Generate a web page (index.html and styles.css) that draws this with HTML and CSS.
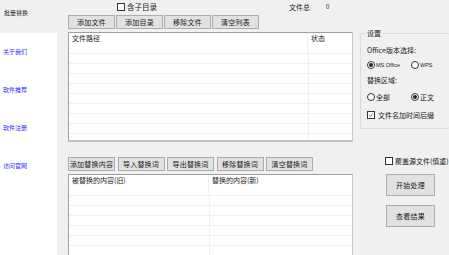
FILE: index.html
```html
<!DOCTYPE html>
<html lang="zh">
<head>
  <meta charset="UTF-8">
  <title>批量替换</title>
  <link rel="stylesheet" href="styles.css">
</head>
<body>
  <div class="window">
    <div class="sidebar">
      <div class="sidebar-head">批量替换</div>
      <div class="sidebar-links">
        <a class="side-link">关于我们</a>
        <a class="side-link">软件推荐</a>
        <a class="side-link">软件注册</a>
        <a class="side-link">访问官网</a>
      </div>
    </div>

    <div class="main">
      <div class="work">
        <div class="top-row">
          <label class="check sub-dir"><span class="box"></span>含子目录</label>
          <span class="count-label">文件总</span>
          <span class="count-value">0</span>
        </div>
        <div class="btn-row">
          <button class="btn">添加文件</button>
          <button class="btn">添加目录</button>
          <button class="btn">移除文件</button>
          <button class="btn">清空列表</button>
        </div>
        <div class="grid-box file-list">
          <div class="grid-head">
            <span class="col col-path">文件路径</span>
            <span class="col col-state">状态</span>
          </div>
          <div class="grid-rows"></div>
        </div>
        <div class="btn-row btn-row-2">
          <button class="btn">添加替换内容</button>
          <button class="btn">导入替换词</button>
          <button class="btn">导出替换词</button>
          <button class="btn">移除替换词</button>
          <button class="btn">清空替换词</button>
        </div>
        <div class="grid-box replace-list">
          <div class="grid-head">
            <span class="col col-old">被替换的内容(旧)</span>
            <span class="col col-new">替换的内容(新)</span>
          </div>
          <div class="grid-rows"></div>
        </div>
      </div>

      <div class="side-panel">
        <fieldset class="group">
          <legend>设置</legend>
          <div class="group-label">Office版本选择:</div>
          <div class="radio-row">
            <label class="radio"><span class="dot on"></span>MS Office</label>
            <label class="radio"><span class="dot"></span>WPS</label>
          </div>
          <div class="group-label">替换区域:</div>
          <div class="radio-row radio-row-2">
            <label class="radio big"><span class="dot"></span>全部</label>
            <label class="radio big"><span class="dot on"></span>正文</label>
          </div>
          <label class="check suffix"><span class="box on">
            <svg viewBox="0 0 8 8"><path d="M1.5 4.2 3.2 6 6.6 1.8"/></svg>
          </span>文件名加时间后缀</label>
        </fieldset>
        <label class="check overwrite"><span class="box"></span>覆盖源文件(慎重)</label>
        <button class="btn big-btn">开始处理</button>
        <button class="btn big-btn">查看结果</button>
      </div>
    </div>
  </div>
</body>
</html>
```

FILE: styles.css
```css
:root {
  --form-bg: #f0f0f0;
  --btn-bg: #e1e1e1;
  --btn-border: #adadad;
  --grid-border: #a0a0a0;
  --grid-line: #f0f0f0;
  --text-main: #1a1a1a;
  --link: #2b2bff;
}
body {
  margin: 0;
  padding: 0;
  width: 449px;
  height: 255px;
  overflow: hidden;
  background: var(--form-bg);
  font-family: "Noto Sans CJK SC", "Liberation Sans", sans-serif;
  color: var(--text-main);
}
.window {
  display: flex;
  height: 255px;
}
.sidebar {
  width: 57px;
  flex-shrink: 0;
  display: flex;
  flex-direction: column;
}
.sidebar-head {
  height: 33px;
  box-sizing: border-box;
  padding: 8px 0 0 4px;
  font-size: 6px;
  line-height: 9px;
}
.sidebar-links {
  flex: 1;
  background: #fff;
  display: flex;
  flex-direction: column;
  padding: 14px 0 0 3px;
  gap: 29px;
}
.side-link {
  color: var(--link);
  font-size: 6px;
  line-height: 9px;
  cursor: pointer;
}
.main {
  flex: 1;
  min-width: 0;
  display: flex;
  padding-left: 11px;
  gap: 7px;
}
.work {
  width: 285px;
  flex-shrink: 0;
  display: flex;
  flex-direction: column;
}
.top-row {
  display: flex;
  align-items: center;
  height: 15px;
  font-size: 7px;
}
.sub-dir {
  margin-left: 49px;
  margin-top: -2px;
}
.count-label {
  margin-left: 132px;
  margin-top: -2px;
}
.count-value {
  margin-left: 16px;
  margin-top: -2px;
  font-size: 6px;
}
.check {
  display: flex;
  align-items: center;
  gap: 2px;
  font-size: 7.5px;
  line-height: 10px;
  white-space: nowrap;
}
.box {
  width: 8px;
  height: 8px;
  flex-shrink: 0;
  border: 1px solid #333;
  background: #fff;
  box-sizing: border-box;
  display: flex;
}
.box svg {
  width: 100%;
  height: 100%;
  fill: none;
  stroke: #333;
  stroke-width: 0.9;
}
.btn-row {
  display: flex;
  gap: 1px;
  height: 17px;
}
.btn {
  width: 47px;
  height: 14px;
  flex-shrink: 0;
  padding: 0;
  background: var(--btn-bg);
  border: 1px solid var(--btn-border);
  font-family: "Noto Sans CJK SC", sans-serif;
  font-size: 7px;
  line-height: 12px;
  color: var(--text-main);
  letter-spacing: 0.2px;
  white-space: nowrap;
}
.btn-row-2 {
  margin-top: 15px;
  gap: 2.5px;
  height: 17px;
}
.grid-box {
  background: #fff;
  border: 1px solid var(--grid-border);
  border-right-color: #c8c8c8;
  border-bottom: 2px solid #c0c0c0;
  box-sizing: border-box;
  display: flex;
  flex-direction: column;
}
.file-list {
  height: 110px;
}
.replace-list {
  flex: 1;
  border-bottom: none;
}
.grid-head {
  display: flex;
  height: 20px;
  font-size: 7px;
  line-height: 9px;
  border-bottom: 1px solid var(--grid-line);
}
.col {
  padding: 1px 0 0 3px;
  box-sizing: border-box;
}
.col-path {
  width: 239px;
  border-right: 1px solid var(--grid-line);
}
.col-old {
  width: 140px;
  border-right: 1px solid var(--grid-line);
}
.grid-rows {
  flex: 1;
}
.file-list .grid-rows {
  background:
    linear-gradient(to right, transparent 239px, var(--grid-line) 239px, var(--grid-line) 240px, transparent 240px),
    repeating-linear-gradient(to bottom, transparent 0, transparent 9px, var(--grid-line) 9px, var(--grid-line) 10px);
}
.replace-list .grid-rows {
  background:
    linear-gradient(to right, transparent 140px, var(--grid-line) 140px, var(--grid-line) 141px, transparent 141px),
    repeating-linear-gradient(to bottom, transparent 0, transparent 9px, var(--grid-line) 9px, var(--grid-line) 10px);
}
.side-panel {
  flex: 1;
  min-width: 0;
  display: flex;
  flex-direction: column;
  align-items: flex-start;
}
.group {
  width: 100%;
  box-sizing: border-box;
  margin: 29px 0 0 0;
  padding: 8px 0 0 6px;
  height: 100px;
  border: 1px solid #dcdcdc;
  border-right: none;
  border-radius: 2px;
  font-size: 7px;
  min-width: 0;
}
.group legend {
  padding: 0 1px;
  margin-left: -1px;
  font-size: 7px;
  line-height: 8px;
}
.group-label {
  font-size: 7px;
  line-height: 10px;
  white-space: nowrap;
}
.radio-row {
  display: flex;
  height: 20px;
  align-items: center;
}
.radio-row-2 {
  height: 24px;
}
.radio {
  display: flex;
  align-items: center;
  gap: 1px;
  width: 44px;
  flex-shrink: 0;
  font-size: 5.5px;
  font-family: "Liberation Sans", sans-serif;
  white-space: nowrap;
}
.radio.big {
  font-size: 7px;
  font-family: "Noto Sans CJK SC", sans-serif;
}
.dot {
  width: 8px;
  height: 8px;
  flex-shrink: 0;
  border: 1px solid #333;
  border-radius: 50%;
  box-sizing: border-box;
  background: #fff;
  display: flex;
  align-items: center;
  justify-content: center;
}
.dot.on::after {
  content: "";
  width: 4px;
  height: 4px;
  border-radius: 50%;
  background: #222;
}
.suffix {
  margin-top: 1px;
  font-size: 7px;
  gap: 3px;
}
.overwrite {
  margin: 27px 0 0 25px;
  font-size: 7px;
  gap: 2px;
}
.big-btn {
  width: 49px;
  height: 22px;
  margin: 8px 0 0 26px;
}
.big-btn + .big-btn {
  margin-top: 9px;
}
```
